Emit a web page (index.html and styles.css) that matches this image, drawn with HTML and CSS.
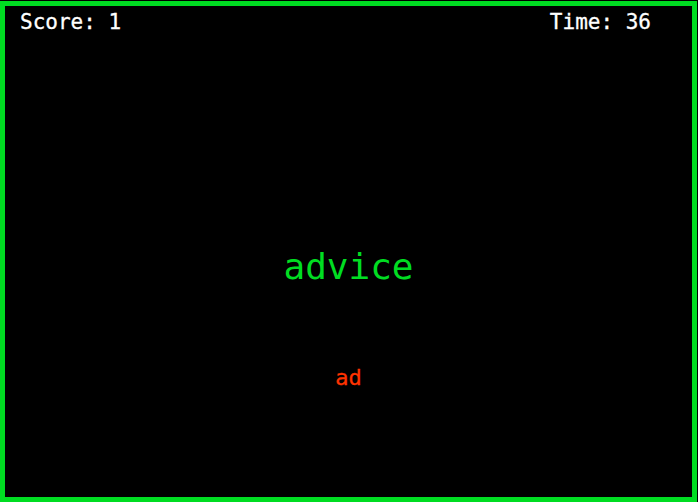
FILE: index.html
```html
<!DOCTYPE html>
<html>
<head>
<meta charset="utf-8">
<link rel="stylesheet" href="styles.css">
</head>
<body>
<div class="game">
  <div class="hud">
    <span class="score">Score: 1</span>
    <span class="time">Time: 36</span>
  </div>
  <div class="stage">
    <div class="word">advice</div>
    <div class="typed">ad</div>
  </div>
</div>
</body>
</html>
```
FILE: styles.css
```css
html, body {
  margin: 0;
  padding: 0;
  background: #000;
  width: 698px;
  height: 502px;
  overflow: hidden;
}
.game {
  box-sizing: border-box;
  margin-top: 1px;
  width: 697px;
  height: 501px;
  border: 5px solid #00dd22;
  background: #000;
  display: flex;
  flex-direction: column;
  font-family: "DejaVu Sans Mono", monospace;
}
.hud {
  display: flex;
  justify-content: space-between;
  padding: 4px 41px 0 15px;
  font-size: 21px;
  line-height: 24px;
  color: #fff;
  -webkit-text-stroke: 0.3px #fff;
}
.stage {
  display: flex;
  flex-direction: column;
  align-items: center;
  padding-top: 213px;
}
.word {
  font-size: 36px;
  line-height: 40px;
  color: #00dd22;
}
.typed {
  margin-top: 78px;
  font-size: 22px;
  line-height: 26px;
  color: #ff3300;
  -webkit-text-stroke: 0.3px #ff3300;
}
```
